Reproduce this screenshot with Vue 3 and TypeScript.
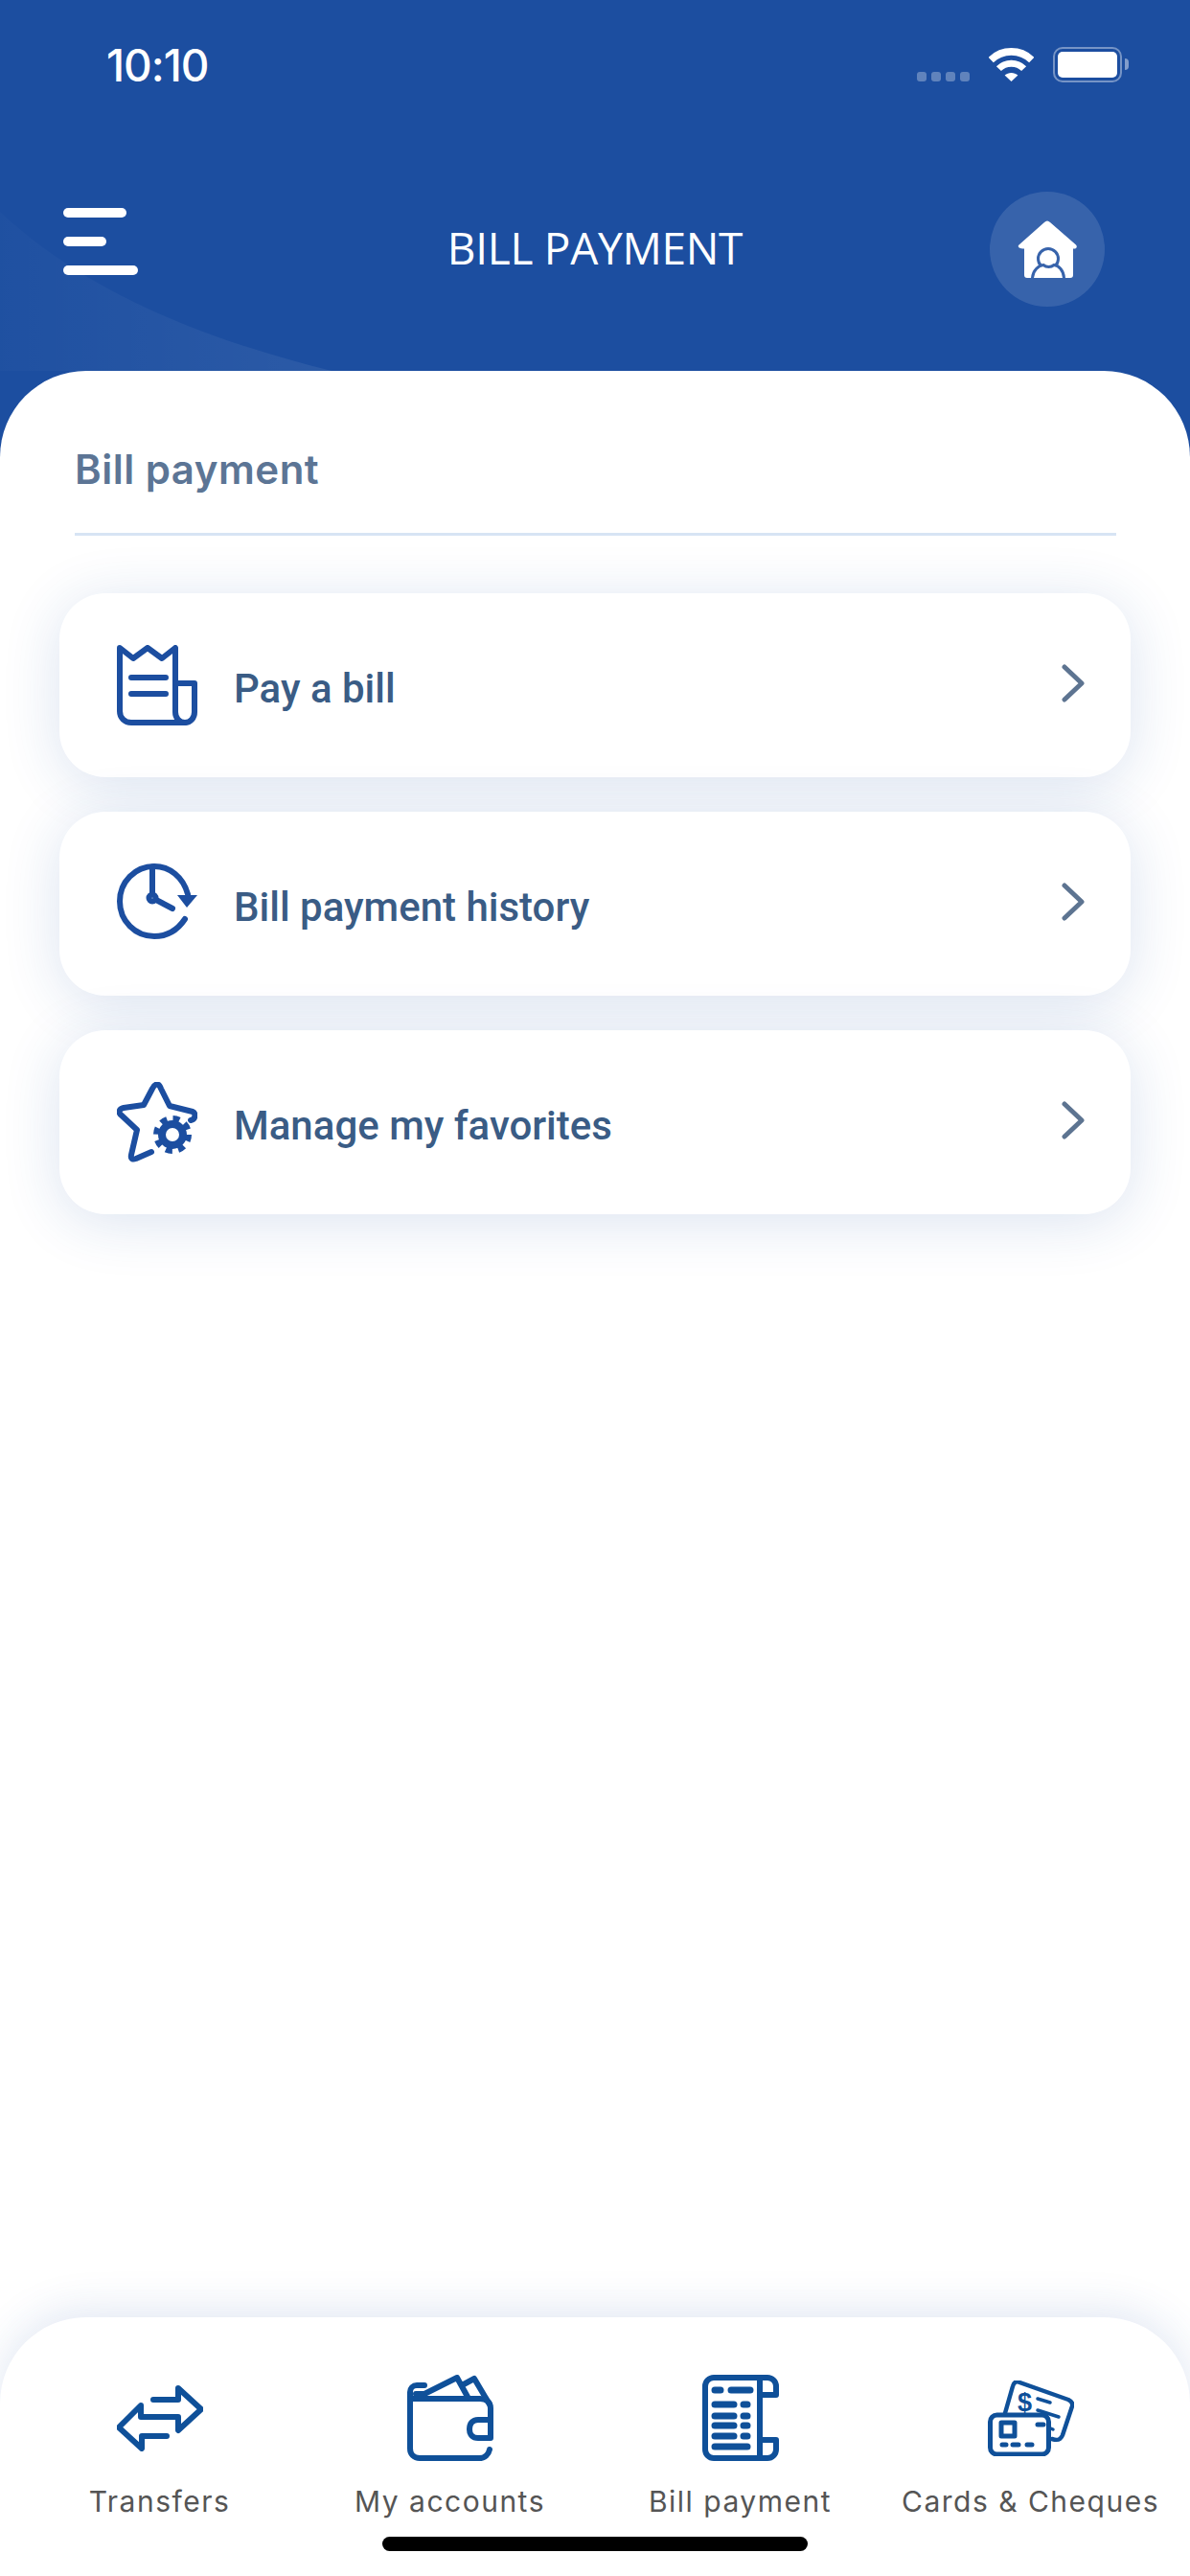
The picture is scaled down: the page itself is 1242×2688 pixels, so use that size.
<script setup lang="ts">
// 账单支付页面，内容都是静态的
const time = '10:10'
const title = 'BILL PAYMENT'
const signalDots = [1, 2, 3, 4]
</script>

<template>
  <div class="page">
    <header class="top">
      <svg class="wedge" width="400" height="170" viewBox="0 0 400 170">
        <defs>
          <linearGradient id="wedgeFade" x1="0" y1="0" x2="1" y2="0">
            <stop offset="0" stop-color="#fff" stop-opacity=".015" />
            <stop offset="1" stop-color="#fff" stop-opacity=".07" />
          </linearGradient>
        </defs>
        <path d="M0 4C90 88 210 136 346 170H0Z" fill="url(#wedgeFade)" />
      </svg>

      <div class="status">
        <span class="time">{{ time }}</span>
        <div class="status-icons">
          <div class="signal">
            <i v-for="d in signalDots" :key="d" />
          </div>
          <svg class="wifi" width="47" height="36" viewBox="0 0 47 36">
            <path d="M2.2 13.6C14 2 33 2 44.8 13.6" fill="none" stroke="#fff" stroke-width="7.6" />
            <path d="M10.4 22.6C17.5 15.3 29.5 15.3 36.6 22.6" fill="none" stroke="#fff" stroke-width="7" />
            <path d="M16.6 29.6C20.4 26 26.6 26 30.4 29.6L23.5 36Z" fill="#fff" />
          </svg>
          <div class="battery"><div class="battery-fill" /></div>
          <i class="battery-nub" />
        </div>
      </div>

      <div class="nav">
        <div class="menu">
          <i class="bar bar-a" />
          <i class="bar bar-b" />
          <i class="bar bar-c" />
        </div>
        <h1 class="title">{{ title }}</h1>
        <div class="home">
          <svg width="63" height="60" viewBox="0 0 63 60">
            <path d="M31 0.5C32 0.5 33 1 34 2L61 25.5C63 28 61 30 58 29.5V57C58 59 57 60 55 60H10C8 60 7 59 7 57V29.5C3 30 -1 28 1.5 25.5L28 2C29 1 30 0.5 31 0.5Z" fill="#fff" />
            <circle cx="32" cy="40" r="10.5" fill="#fff" stroke="#3763ab" stroke-width="3" />
            <path d="M15.5 60C16 52 22 47 27 46.5C30 49 35 49 38 46.5C43 47 48 52 48.5 60" fill="#fff" stroke="#3763ab" stroke-width="3" />
          </svg>
        </div>
      </div>
    </header>

    <main class="sheet">
      <section class="content">
        <h2 class="heading">Bill payment</h2>
        <div class="rule" />

        <div class="cards">
          <div class="card">
            <svg class="card-icon" width="84" height="84" viewBox="0 0 84 84">
              <path d="M3 3L17 14L32 3L47 14L61 3V70C61 76 65 81 71 81H15C8 81 3 76 3 69Z" />
              <path d="M61 40H81V70C81 76 77 81 71 81" />
              <path d="M15 34H51M15 51H51" />
            </svg>
            <span class="label">Pay a bill</span>
            <svg class="chevron" width="24" height="40" viewBox="0 0 24 40">
              <path d="M3 3L21 20L3 37" />
            </svg>
          </div>

          <div class="card">
            <svg class="card-icon" width="84" height="84" viewBox="0 0 84 84">
              <path d="M74 32C69 14 55 3 39 3C19 3 3 19 3 39.500C3 60 19 76 39 76C52 76 63 70 71 58" />
              <path d="M37 3.500V32M41 38L58 47" />
              <circle cx="37" cy="36" r="3.500" />
              <path class="solid" d="M63 33H84L73 46Z" />
            </svg>
            <span class="label">Bill payment history</span>
            <svg class="chevron" width="24" height="40" viewBox="0 0 24 40">
              <path d="M3 3L21 20L3 37" />
            </svg>
          </div>

          <div class="card">
            <svg class="card-icon" width="84" height="84" viewBox="0 0 84 84">
              <path d="M77 40C82 39 83 33 79 31L55 25L46 7C44 1 40 1 37 7L28 24L7 27C2 28 1 32 5 35L21 50L15 76C14 81 17 81 20 80L36 73" />
              <circle cx="58" cy="55" r="11" stroke-width="8" />
              <circle class="teeth" cx="58" cy="55" r="17" />
            </svg>
            <span class="label">Manage my favorites</span>
            <svg class="chevron" width="24" height="40" viewBox="0 0 24 40">
              <path d="M3 3L21 20L3 37" />
            </svg>
          </div>
        </div>
      </section>

      <nav class="tabs">
        <div class="tab-row">
          <div class="tab">
            <div class="tab-icon">
              <svg width="90" height="69" viewBox="0 0 90 69">
                <path d="M38 15H64V3L88 25L64 47V33H25V21L2 44L26 66V53H52" />
              </svg>
            </div>
            <span class="tab-label">Transfers</span>
          </div>

          <div class="tab">
            <div class="tab-icon">
              <svg width="90" height="90" viewBox="0 0 90 90">
                <path d="M18 11H10C6 11 3 14 3 18V77C3 83 7 87 13 87H75C81 87 85 83 86 78" />
                <path d="M3 25H76C82 25 87 28 87 35V66H74C68 66 65 62 65 57C65 51 68 47 74 47H87" />
                <path d="M9 20H18L52 3L63 23M59 10L70 4L86 31" />
              </svg>
            </div>
            <span class="tab-label">My accounts</span>
          </div>

          <div class="tab">
            <div class="tab-icon">
              <svg width="80" height="90" viewBox="0 0 80 90">
                <path d="M60 21H77V12C77 7 73 3 68 3H12C7 3 3 7 3 12V78C3 83 7 87 12 87H68C73 87 77 83 77 78V68H60M60 3V87" />
                <path stroke-width="7" d="M13 16H19M30 16H50M13 31H33M43 31H47M13 43H33M43 43H47M13 53H33M43 53H47M13 64H33M43 64H47M13 75H47" />
              </svg>
            </div>
            <span class="tab-label">Bill payment</span>
          </div>

          <div class="tab">
            <div class="tab-icon">
              <svg width="90" height="79" viewBox="0 0 90 79">
                <path stroke-width="4.500" d="M18 34L26 6C27 2 30 0 33 2L84 20C88 22 89 24 88 27L78 57C76 62 73 63 67 61" />
                <path stroke-width="3.500" d="M52 19L65 23M52 31L74 38M63 49L68 51" />
                <text class="dollar" x="31" y="32">$</text>
                <rect x="2.500" y="36" width="61" height="41" rx="7" fill="#fff" stroke-width="5" />
                <rect x="14" y="44" width="14" height="14" stroke-width="5" />
                <path stroke-width="5" d="M52 46H58M15 67H19M26 67H32M41 67H46" />
              </svg>
            </div>
            <span class="tab-label">Cards &amp; Cheques</span>
          </div>
        </div>
        <div class="home-indicator" />
      </nav>
    </main>
  </div>
</template>

<style>
html,
body {
  margin: 0;
  background: #fff;
}
</style>

<style scoped>
.page {
  width: 1242px;
  height: 2688px;
  display: flex;
  flex-direction: column;
  background: #1c4ea0;
  font-family: Roboto, "Liberation Sans", sans-serif;
  overflow: hidden;
}

.top {
  position: relative;
  height: 387px;
  flex: none;
}

.wedge {
  position: absolute;
  left: 0;
  bottom: 0;
}

.status {
  position: relative;
  height: 136px;
  display: flex;
  justify-content: space-between;
  padding: 0 64px 0 111px;
  box-sizing: border-box;
}

.time {
  margin-top: 40px;
  font-family: Inter, Roboto, sans-serif;
  font-size: 46px;
  line-height: 56px;
  font-weight: 500;
  letter-spacing: -1px;
  color: #fff;
}

.status-icons {
  display: flex;
  align-items: flex-start;
  padding-top: 49px;
}

.signal {
  display: flex;
  gap: 5px;
  margin-top: 26px;
  margin-right: 20px;
}

.signal i {
  width: 10px;
  height: 10px;
  border-radius: 3px;
  background: rgba(255, 255, 255, 0.3);
}

.wifi {
  display: block;
  margin-right: 20px;
}

.battery {
  width: 72px;
  height: 37px;
  box-sizing: border-box;
  border: 2.5px solid rgba(255, 255, 255, 0.4);
  border-radius: 10px;
  padding: 3px;
}

.battery-fill {
  height: 100%;
  background: #fff;
  border-radius: 5px;
}

.battery-nub {
  width: 4px;
  height: 12px;
  margin: 12px 0 0 3px;
  background: rgba(255, 255, 255, 0.45);
  border-radius: 0 4px 4px 0;
}

.nav {
  position: relative;
  height: 120px;
  margin-top: 64px;
  padding: 0 89px;
  display: grid;
  grid-template-columns: 1fr auto 1fr;
  align-items: center;
}

.menu {
  display: flex;
  flex-direction: column;
  gap: 20px;
  margin: -17px 0 0 -23px;
}

.bar {
  display: block;
  height: 10px;
  border-radius: 5px;
  background: #fff;
}

.bar-a {
  width: 66px;
}

.bar-b {
  width: 45px;
}

.bar-c {
  width: 78px;
}

.title {
  margin: -4px 0 0;
  font-family: "Open Sans", Roboto, sans-serif;
  font-size: 46px;
  font-weight: 400;
  letter-spacing: -0.3px;
  color: #fff;
  white-space: nowrap;
}

.home {
  justify-self: end;
  width: 120px;
  height: 120px;
  border-radius: 50%;
  background: rgba(255, 255, 255, 0.12);
  display: flex;
  align-items: center;
  justify-content: center;
}

.sheet {
  flex: 1;
  display: flex;
  flex-direction: column;
  justify-content: space-between;
  background: #fff;
  border-radius: 90px 90px 0 0;
}

.content {
  padding: 72px 62px 0;
}

.heading {
  margin: 0 16px;
  font-family: Inter, Roboto, sans-serif;
  font-size: 42px;
  line-height: 62px;
  font-weight: 600;
  letter-spacing: 0.5px;
  color: #5c7595;
}

.rule {
  height: 3px;
  margin: 35px 15px 60px 16px;
  background: #d7e4f4;
}

.cards {
  display: flex;
  flex-direction: column;
  gap: 36px;
}

.card {
  height: 192px;
  display: flex;
  align-items: center;
  padding: 0 48px 0 60px;
  background: #fff;
  border-radius: 48px;
  box-shadow: 0 8px 60px rgba(28, 78, 160, 0.16);
}

.card-icon {
  flex: none;
  margin-right: 38px;
  fill: none;
  stroke: #1c4ea0;
  stroke-width: 6;
  stroke-linecap: round;
  stroke-linejoin: round;
}

.card-icon .solid {
  fill: #1c4ea0;
  stroke: none;
}

.card-icon .teeth {
  stroke-dasharray: 7 6.35;
  stroke-linecap: butt;
}

.label {
  flex: 1;
  margin-top: 6px;
  font-size: 42px;
  font-weight: 500;
  color: #3a5c85;
}

.chevron {
  flex: none;
  margin-top: -4px;
  fill: none;
  stroke: #5d7491;
  stroke-width: 5;
  stroke-linecap: round;
  stroke-linejoin: round;
}

.tabs {
  height: 270px;
  box-sizing: border-box;
  padding: 60px 15px 0;
  background: #fff;
  border-radius: 90px 90px 0 0;
  box-shadow: 0 -8px 44px rgba(28, 78, 160, 0.13);
}

.tab-row {
  display: grid;
  grid-template-columns: repeat(4, 1fr);
}

.tab {
  display: flex;
  flex-direction: column;
  align-items: center;
}

.tab-icon {
  height: 90px;
  display: flex;
  align-items: center;
  margin-bottom: 22px;
}

.tab-icon svg {
  display: block;
  fill: none;
  stroke: #0f5099;
  stroke-width: 6;
  stroke-linecap: round;
  stroke-linejoin: round;
}

.dollar {
  font-family: "Liberation Sans", sans-serif;
  font-size: 27px;
  font-weight: 700;
  fill: #0f5099;
  stroke: none;
}

.tab-label {
  font-family: Inter, Roboto, sans-serif;
  font-size: 30px;
  line-height: 40px;
  letter-spacing: 1.5px;
  color: #555;
  white-space: nowrap;
}

.home-indicator {
  width: 444px;
  height: 15px;
  margin: 17px auto 0;
  border-radius: 8px;
  background: #000;
}
</style>
